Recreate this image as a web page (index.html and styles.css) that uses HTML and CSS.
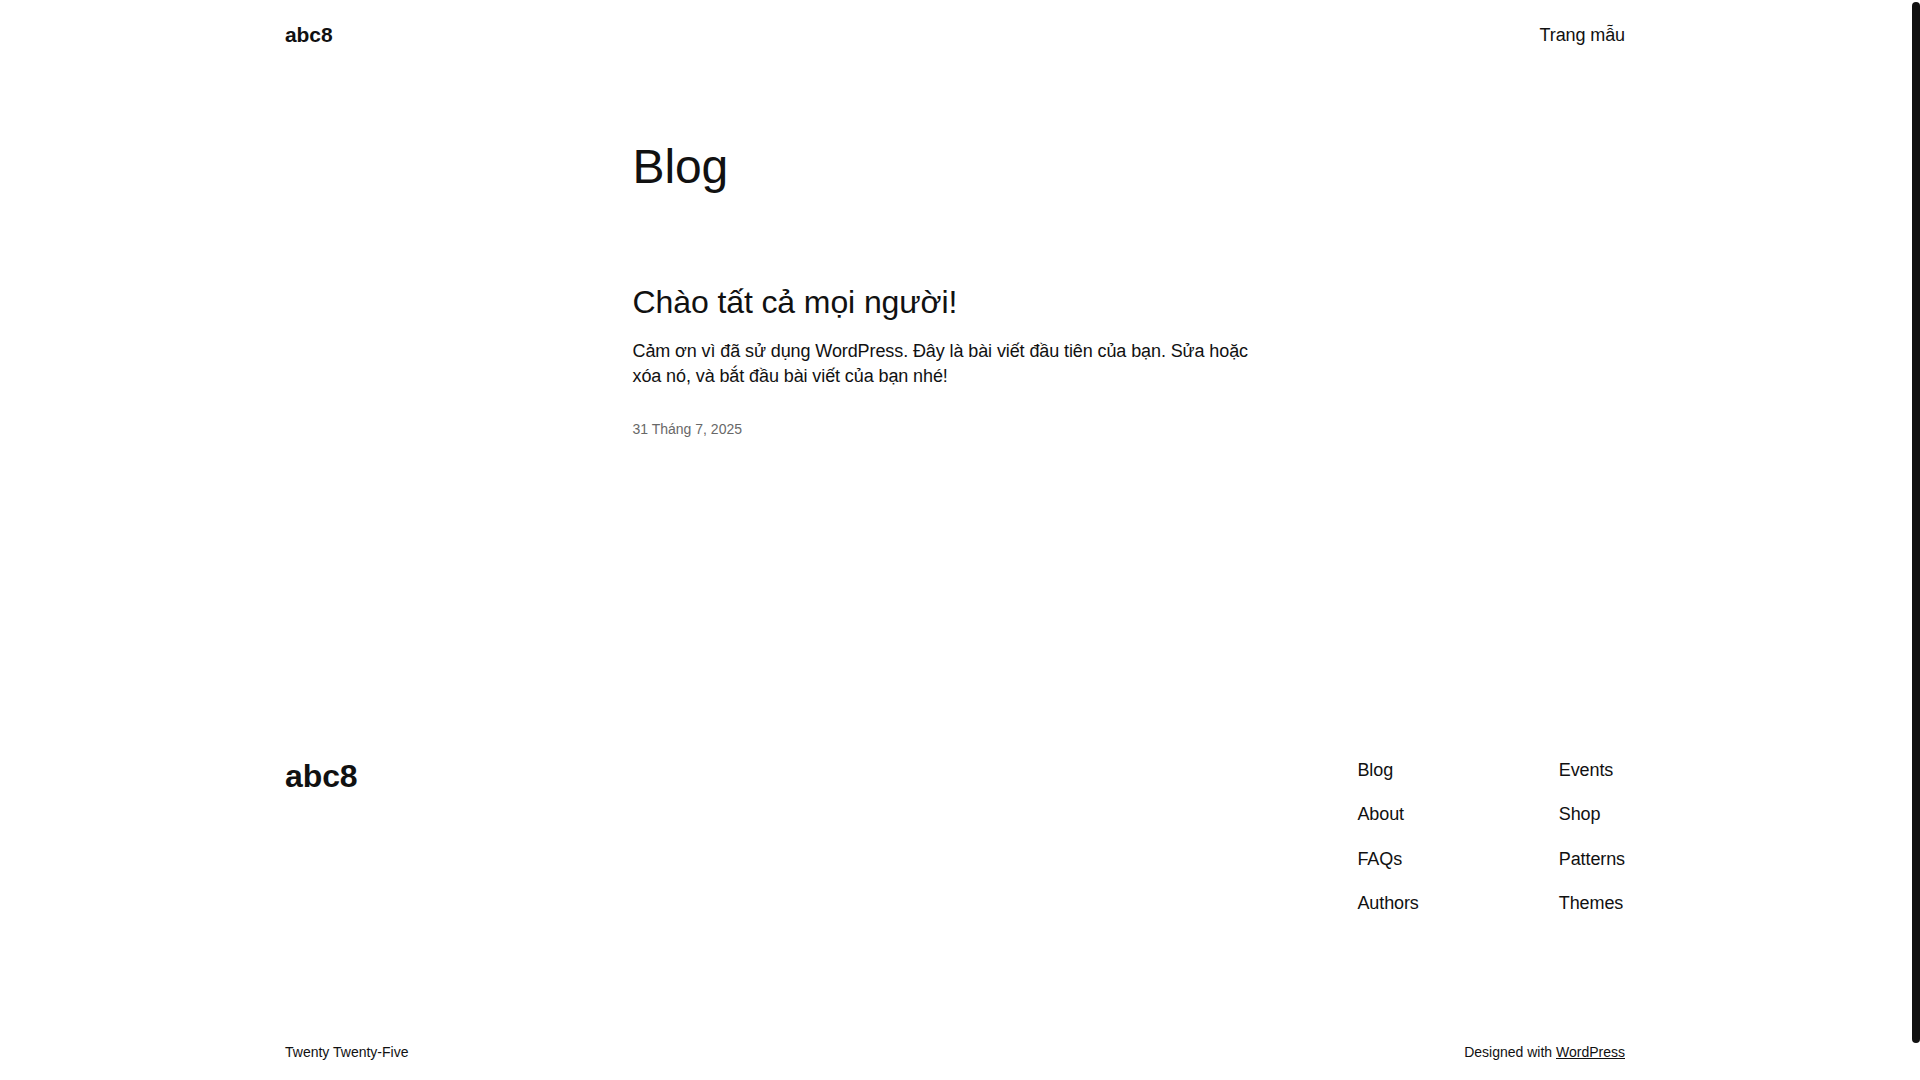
FILE: index.html
```html
<!DOCTYPE html>
<html lang="vi">
<head>
<meta charset="utf-8">
<title>Blog – abc8</title>
<link rel="stylesheet" href="styles.css">
</head>
<body>
<div class="site">
  <header class="site-header">
    <div class="wide header-row">
      <a class="site-title" href="#">abc8</a>
      <nav class="header-nav"><a href="#">Trang mẫu</a></nav>
    </div>
  </header>

  <main class="content">
    <h1 class="page-title">Blog</h1>
    <article class="post">
      <h2 class="post-title"><a href="#">Chào tất cả mọi người!</a></h2>
      <p class="post-excerpt">Cảm ơn vì đã sử dụng WordPress. Đây là bài viết đầu tiên của bạn. Sửa hoặc xóa nó, và bắt đầu bài viết của bạn nhé!</p>
      <div class="post-date">31 Tháng 7, 2025</div>
    </article>
  </main>

  <footer class="site-footer">
    <div class="wide footer-row">
      <a class="footer-title" href="#">abc8</a>
      <div class="footer-navs">
        <ul class="footer-nav">
          <li><a href="#">Blog</a></li>
          <li><a href="#">About</a></li>
          <li><a href="#">FAQs</a></li>
          <li><a href="#">Authors</a></li>
        </ul>
        <ul class="footer-nav">
          <li><a href="#">Events</a></li>
          <li><a href="#">Shop</a></li>
          <li><a href="#">Patterns</a></li>
          <li><a href="#">Themes</a></li>
        </ul>
      </div>
    </div>
    <div class="wide credits">
      <span>Twenty Twenty-Five</span>
      <span>Designed with <a class="credit-link" href="#">WordPress</a></span>
    </div>
  </footer>
</div>
<div class="scroll-thumb"></div>
</body>
</html>
```

FILE: styles.css
```css
html {
  overflow: hidden;
  height: 100%;
}

body {
  margin: 0;
  background: #ffffff;
  color: #111111;
  font-family: "Liberation Sans", Arial, sans-serif;
  font-size: 18px;
  line-height: 1.4;
  letter-spacing: -0.1px;
}

a {
  color: inherit;
  text-decoration: none;
}

.site {
  margin-right: 10px;
}

.wide {
  max-width: 1340px;
  margin: 0 auto;
}

/* Header */
.header-row {
  display: flex;
  justify-content: space-between;
  align-items: center;
  height: 70px;
}

.site-title {
  font-size: 21px;
  font-weight: 700;
  line-height: 1.4;
}

.header-nav {
  font-size: 18px;
  line-height: 1.4;
  padding-top: 2px;
}

/* Main */
.content {
  max-width: 645px;
  margin: 0 auto;
}

.page-title {
  margin: 68px 0 0;
  font-size: 48px;
  font-weight: 400;
  line-height: 1.2;
  letter-spacing: -0.1px;
}

.post {
  margin-top: 87px;
}

.post-title {
  margin: 0;
  font-size: 32px;
  font-weight: 400;
  line-height: 1.2;
}

.post-excerpt {
  margin: 18px 0 0;
  font-size: 18px;
  line-height: 25.2px;
}

.post-date {
  margin-top: 31px;
  font-size: 14px;
  line-height: 1.4;
  letter-spacing: 0;
  color: #686868;
}

/* Footer */
.site-footer {
  margin-top: 318px;
}

.footer-row {
  display: flex;
  justify-content: space-between;
  align-items: flex-start;
}

.footer-title {
  font-size: 32px;
  font-weight: 700;
  line-height: 1.2;
  margin-top: -1px;
}

.footer-navs {
  display: flex;
  gap: 140px;
  align-items: flex-start;
}

.footer-nav {
  list-style: none;
  margin: 0;
  padding: 0;
  display: flex;
  flex-direction: column;
  gap: 19.1px;
  font-size: 18px;
  line-height: 1.4;
}

.credits {
  margin-top: 127px;
  display: flex;
  justify-content: space-between;
  font-size: 14px;
  line-height: 1.4;
  letter-spacing: 0;
}

.credit-link {
  text-decoration: underline;
}

/* Overlay scrollbar thumb */
.scroll-thumb {
  position: fixed;
  top: 2px;
  right: 0;
  width: 8px;
  height: 1041px;
  background: #111111;
  border-radius: 4px;
}
```
